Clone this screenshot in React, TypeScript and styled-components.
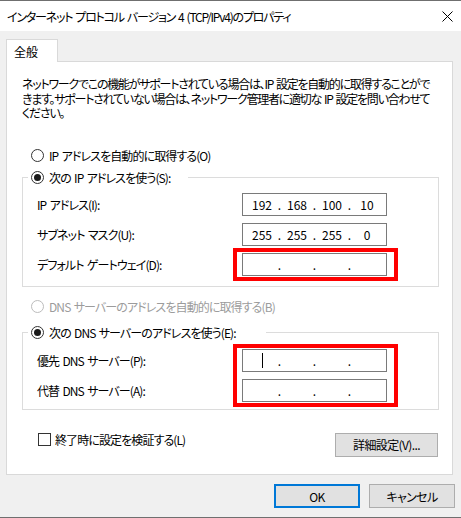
import React from 'react'
import styled, { createGlobalStyle } from 'styled-components'

const GlobalStyle = createGlobalStyle`
  body {
    margin: 0;
    font-family: "Noto Sans CJK JP", "Noto Sans", sans-serif;
    font-size: 12px;
    font-feature-settings: "palt";
    letter-spacing: -0.9px;
    word-spacing: 1.5px;
    color: #000;
  }
  * { box-sizing: border-box; }
`

const Window = styled.div`
  width: 461px;
  height: 518px;
  background: #f0f0f0;
  border-top: 1px solid #6f6f6f;
  border-bottom: 1px solid #6f6f6f;
  display: flex;
  flex-direction: column;
`

const TitleBar = styled.div`
  height: 30px;
  background: #fff;
  display: flex;
  align-items: center;
  justify-content: space-between;
  padding: 0 8px 0 7px;
`

const Title = styled.span`
  font-size: 12px;
  letter-spacing: -1.2px;
  white-space: nowrap;
`

const Body = styled.div`
  flex: 1;
  padding: 8px 6px 0 6px;
  display: flex;
  flex-direction: column;
`

const TabStrip = styled.div`
  display: flex;
`

const Tab = styled.div`
  width: 52px;
  height: 23px;
  background: #fff;
  border: 1px solid #d9d9d9;
  border-bottom: none;
  padding: 3px 0 0 7px;
  margin-bottom: -1px;
  letter-spacing: 0;
  position: relative;
  z-index: 1;
`

const Panel = styled.div`
  width: 447px;
  height: 414px;
  background: #fff;
  border: 1px solid #d9d9d9;
  padding: 15px 13px 0 15px;
  display: flex;
  flex-direction: column;
`

const Description = styled.div`
  line-height: 14.5px;
  letter-spacing: -1.25px;
  white-space: nowrap;
`

const Line = styled.div``

const RadioRow = styled.label<{ $top: number; $disabled?: boolean }>`
  display: flex;
  align-items: center;
  gap: 5px;
  height: 16px;
  margin-top: ${p => p.$top}px;
  padding-left: 9px;
  color: ${p => (p.$disabled ? '#9c9c9c' : '#000')};
  white-space: nowrap;
`

const Circle = styled.span<{ $checked?: boolean; $disabled?: boolean }>`
  width: 13px;
  height: 13px;
  border-radius: 50%;
  border: 1px solid ${p => (p.$disabled ? '#bcbcbc' : '#333')};
  background: #fff;
  display: flex;
  align-items: center;
  justify-content: center;
  flex: none;
  &::after {
    content: '';
    display: ${p => (p.$checked ? 'block' : 'none')};
    width: 7px;
    height: 7px;
    border-radius: 50%;
    background: #1a1a1a;
  }
`

const Group = styled.fieldset<{ $top: number }>`
  margin: ${p => p.$top}px 0 0 0;
  padding: 0;
  width: 417px;
  border: 1px solid #dcdcdc;
  min-width: 0;
`

const Legend = styled.legend<{ $right: number }>`
  margin-left: 5px;
  padding: 0 ${p => p.$right}px 0 3px;
`

const LegendRow = styled.span`
  display: flex;
  align-items: center;
  gap: 5px;
  height: 16px;
  white-space: nowrap;
`

const Fields = styled.div<{ $pt: number; $pb: number }>`
  display: grid;
  grid-template-columns: 1fr 145px;
  grid-auto-rows: 23px;
  row-gap: 7px;
  padding: ${p => p.$pt}px 51px ${p => p.$pb}px 14px;
`

const Label = styled.span<{ $row: number }>`
  grid-column: 1;
  grid-row: ${p => p.$row};
  align-self: center;
  white-space: nowrap;
`

const IpBox = styled.div<{ $row: number }>`
  grid-column: 2;
  grid-row: ${p => p.$row};
  border: 1px solid #7a7a7a;
  background: #fff;
  display: flex;
  align-items: center;
  padding-left: 4px;
  letter-spacing: 0;
`

const Octet = styled.span`
  width: 30px;
  display: flex;
  justify-content: center;
  align-items: center;
  height: 100%;
`

const Dot = styled.span`
  width: 5px;
  text-align: center;
`

const Caret = styled.span`
  width: 1px;
  height: 15px;
  background: #000;
`

const Highlight = styled.div<{ $row: string }>`
  grid-column: 2;
  grid-row: ${p => p.$row};
  margin: -5px -11px -5px -9px;
  border: 4px solid #ff0000;
  pointer-events: none;
  z-index: 2;
`

const BottomRow = styled.div`
  display: flex;
  align-items: flex-start;
  justify-content: space-between;
  width: 417px;
  margin-top: 23px;
  padding: 0 1px 0 16px;
`

const Check = styled.label`
  display: flex;
  align-items: center;
  gap: 4px;
  height: 13px;
  white-space: nowrap;
`

const Box = styled.span`
  width: 13px;
  height: 13px;
  border: 1px solid #333;
  background: #fff;
`

const Button = styled.button<{ $w: number; $default?: boolean }>`
  width: ${p => p.$w}px;
  height: 24px;
  background: #e1e1e1;
  border: ${p => (p.$default ? '2px solid #0078d7' : '1px solid #adadad')};
  font-family: inherit;
  font-size: 12px;
  font-feature-settings: "palt";
  letter-spacing: -0.6px;
  color: #000;
  padding: 0;
`

const Footer = styled.div`
  display: flex;
  justify-content: flex-end;
  gap: 9px;
  margin-top: 9px;
`

const Ip = ({ row, parts, caret }: { row: number; parts?: string[]; caret?: boolean }) => (
  <IpBox $row={row}>
    {[0, 1, 2, 3].map(i => (
      <React.Fragment key={i}>
        <Octet>{caret && i === 0 ? <Caret /> : parts ? parts[i] : ''}</Octet>
        {i < 3 && <Dot>.</Dot>}
      </React.Fragment>
    ))}
  </IpBox>
)

const CloseIcon = () => (
  <svg width="11" height="11" viewBox="0 0 11 11">
    <path d="M0.5 0.5 L10.5 10.5 M10.5 0.5 L0.5 10.5" stroke="#000" strokeWidth="1" />
  </svg>
)

export default function App() {
  return (
    <>
      <GlobalStyle />
      <Window>
        <TitleBar>
          <Title>インターネット プロトコル バージョン 4 (TCP/IPv4)のプロパティ</Title>
          <CloseIcon />
        </TitleBar>
        <Body>
          <TabStrip>
            <Tab>全般</Tab>
          </TabStrip>
          <Panel>
            <Description>
              <Line>ネットワークでこの機能がサポートされている場合は、IP 設定を自動的に取得することがで</Line>
              <Line>きます。サポートされていない場合は、ネットワーク管理者に適切な IP 設定を問い合わせて</Line>
              <Line>ください。</Line>
            </Description>

            <RadioRow $top={27}>
              <Circle />
              IP アドレスを自動的に取得する(O)
            </RadioRow>

            <Group $top={6}>
              <Legend $right={18}>
                <LegendRow>
                  <Circle $checked />
                  次の IP アドレスを使う(S):
                </LegendRow>
              </Legend>
              <Fields $pt={7} $pb={10}>
                <Label $row={1}>IP アドレス(I):</Label>
                <Ip row={1} parts={['192', '168', '100', '10']} />
                <Label $row={2}>サブネット マスク(U):</Label>
                <Ip row={2} parts={['255', '255', '255', '0']} />
                <Label $row={3}>デフォルト ゲートウェイ(D):</Label>
                <Ip row={3} />
                <Highlight $row="3" />
              </Fields>
            </Group>

            <RadioRow $top={12} $disabled>
              <Circle $disabled />
              DNS サーバーのアドレスを自動的に取得する(B)
            </RadioRow>

            <Group $top={10}>
              <Legend $right={30}>
                <LegendRow>
                  <Circle $checked />
                  次の DNS サーバーのアドレスを使う(E):
                </LegendRow>
              </Legend>
              <Fields $pt={8} $pb={7}>
                <Label $row={1}>優先 DNS サーバー(P):</Label>
                <Ip row={1} caret />
                <Label $row={2}>代替 DNS サーバー(A):</Label>
                <Ip row={2} />
                <Highlight $row="1 / span 2" />
              </Fields>
            </Group>

            <BottomRow>
              <Check>
                <Box />
                終了時に設定を検証する(L)
              </Check>
              <Button $w={103}>詳細設定(V)...</Button>
            </BottomRow>
          </Panel>
          <Footer>
            <Button $w={86} $default>OK</Button>
            <Button $w={86}>キャンセル</Button>
          </Footer>
        </Body>
      </Window>
    </>
  )
}
